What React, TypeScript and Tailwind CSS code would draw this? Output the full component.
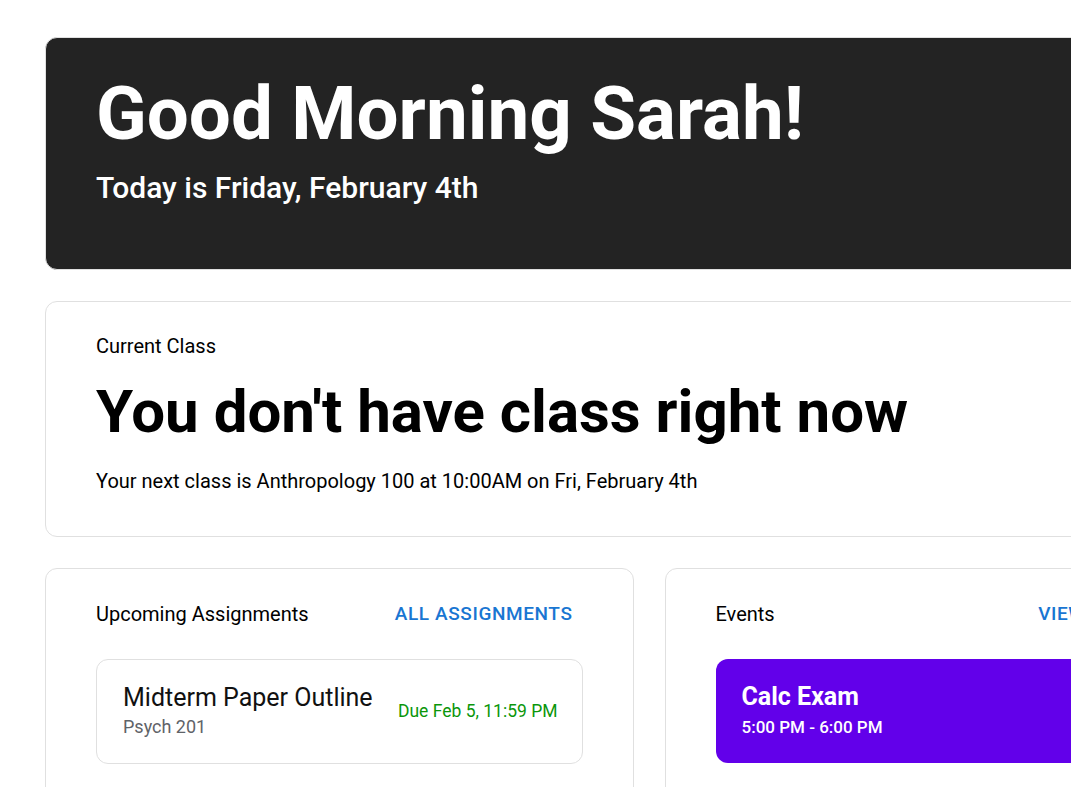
import React from 'react';

type Assignment = {
  title: string;
  course: string;
  due: string;
};

type CalendarEvent = {
  title: string;
  time: string;
};

const assignments: Assignment[] = [
  { title: 'Midterm Paper Outline', course: 'Psych 201', due: 'Due Feb 5, 11:59 PM' },
];

const events: CalendarEvent[] = [{ title: 'Calc Exam', time: '5:00 PM - 6:00 PM' }];

export default function App() {
  return (
    <div className="h-screen w-screen overflow-hidden bg-white font-['Roboto',sans-serif] text-black">
      <div className="flex w-[1253px] flex-col gap-[31px] pl-[45px] pt-[37px]">
        <section className="rounded-xl border border-[#e0e0e0] bg-[#232323] px-[50px] pb-[63px] pt-10 text-white">
          <h1 className="text-[74.5px] font-bold leading-[72px]">Good Morning Sarah!</h1>
          <p className="mt-5 text-[30px] font-medium leading-9">Today is Friday, February 4th</p>
        </section>

        <section className="rounded-xl border border-[#e0e0e0] bg-white px-[50px] pb-[41px] pt-[30px]">
          <p className="text-xl leading-7">Current Class</p>
          <h2 className="mt-[22px] text-6xl font-bold leading-none">You don't have class right now</h2>
          <p className="mt-[25px] text-xl leading-7">
            Your next class is Anthropology 100 at 10:00AM on Fri, February 4th
          </p>
        </section>

        <div className="grid grid-cols-2 gap-[31px]">
          <section className="rounded-xl border border-[#e0e0e0] bg-white px-[50px] pb-12 pt-[31px]">
            <div className="flex items-center justify-between">
              <h3 className="text-xl leading-7">Upcoming Assignments</h3>
              <button className="px-2.5 text-[19px] font-medium uppercase leading-7 tracking-[0.6px] text-[#1976d2]">
                All Assignments
              </button>
            </div>
            <div className="mt-[31px] flex flex-col gap-4">
              {assignments.map((item) => (
                <div
                  key={item.title}
                  className="flex items-center justify-between rounded-xl border border-[#e0e0e0] pb-6 pl-[26px] pr-6 pt-[23px]"
                >
                  <div className="flex flex-col gap-0.5">
                    <span className="text-[25px] leading-[30px] text-[#111]">{item.title}</span>
                    <span className="text-lg leading-6 text-[#5f6368]">{item.course}</span>
                  </div>
                  <span className="text-[17.5px] leading-6 text-[#0a960a]">{item.due}</span>
                </div>
              ))}
            </div>
          </section>

          <section className="rounded-xl border border-[#e0e0e0] bg-white px-[50px] pb-12 pt-[31px]">
            <div className="flex items-center justify-between">
              <h3 className="text-xl leading-7">Events</h3>
              <button className="px-2.5 text-[19px] font-medium uppercase leading-7 tracking-[0.6px] text-[#1976d2]">
                View Calendar
              </button>
            </div>
            <div className="mt-[31px] flex flex-col gap-4">
              {events.map((ev) => (
                <div key={ev.title} className="flex flex-col rounded-xl bg-[#6200ea] px-[26px] py-[22px] text-white">
                  <span className="text-[25px] font-bold leading-8">{ev.title}</span>
                  <span className="text-[17px] font-medium leading-7">{ev.time}</span>
                </div>
              ))}
            </div>
          </section>
        </div>
      </div>
    </div>
  );
}
